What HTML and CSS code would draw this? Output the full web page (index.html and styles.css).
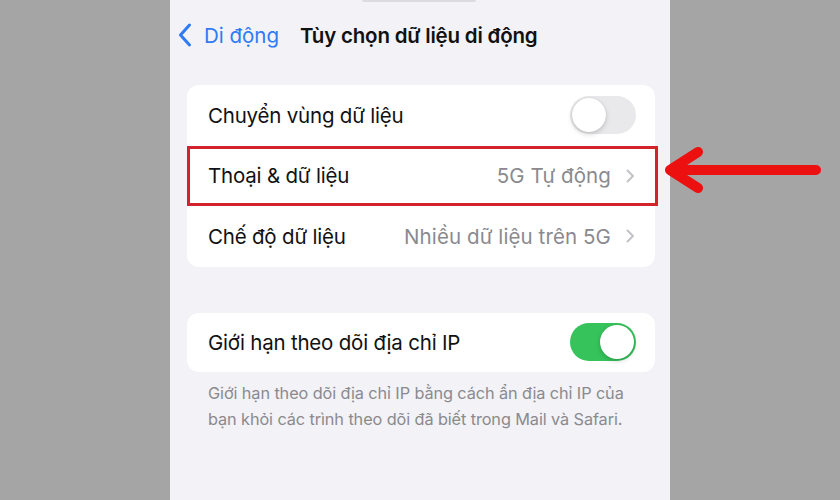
FILE: index.html
```html
<!DOCTYPE html>
<html lang="vi">
<head>
<meta charset="utf-8">
<link rel="stylesheet" href="styles.css">
</head>
<body>
<div class="stage">
  <div class="screen">
    <div class="notch"></div>
    <div class="nav">
      <div class="back">
        <svg class="back-chev" width="14" height="24" viewBox="0 0 14 24"><path d="M11.5 2 L2.5 12 L11.5 22" fill="none" stroke="#2f7bf5" stroke-width="3" stroke-linecap="round" stroke-linejoin="round"/></svg>
        <span class="back-text">Di động</span>
      </div>
      <div class="title">Tùy chọn dữ liệu di động</div>
    </div>

    <div class="card">
      <div class="row">
        <span class="label">Chuyển vùng dữ liệu</span>
        <span class="toggle off"><span class="knob"></span></span>
      </div>
      <div class="row highlighted">
        <span class="label">Thoại &amp; dữ liệu</span>
        <span class="value">5G Tự động</span>
        <svg class="chev" width="9" height="14" viewBox="0 0 9 14"><path d="M1.5 1.5 L7 7 L1.5 12.5" fill="none" stroke="#c3c3c7" stroke-width="2" stroke-linecap="round" stroke-linejoin="round"/></svg>
        <span class="redbox"></span>
      </div>
      <div class="row">
        <span class="label">Chế độ dữ liệu</span>
        <span class="value">Nhiều dữ liệu trên 5G</span>
        <svg class="chev" width="9" height="14" viewBox="0 0 9 14"><path d="M1.5 1.5 L7 7 L1.5 12.5" fill="none" stroke="#c3c3c7" stroke-width="2" stroke-linecap="round" stroke-linejoin="round"/></svg>
      </div>
    </div>

    <div class="card card2">
      <div class="row">
        <span class="label">Giới hạn theo dõi địa chỉ IP</span>
        <span class="toggle on"><span class="knob"></span></span>
      </div>
    </div>
    <p class="footnote">Giới hạn theo dõi địa chỉ IP bằng cách ẩn địa chỉ IP của bạn khỏi các trình theo dõi đã biết trong Mail và Safari.</p>
  </div>
  <svg class="arrow" width="170" height="60" viewBox="0 0 170 60"><path d="M8 25 L154 25 M36 7 L8 25 L36 43" fill="none" stroke="#ec1010" stroke-width="10" stroke-linecap="round" stroke-linejoin="round"/></svg>
</div>
</body>
</html>
```
FILE: styles.css
```css
html, body {
  margin: 0;
  padding: 0;
}
body {
  width: 840px;
  height: 500px;
  overflow: hidden;
  background: #a5a5a5;
  font-family: Inter, "Noto Sans", "Liberation Sans", sans-serif;
}
.stage {
  position: relative;
  width: 840px;
  height: 500px;
  display: flex;
  justify-content: center;
}
.screen {
  position: relative;
  width: 500px;
  height: 500px;
  background: #f2f2f7;
  box-sizing: border-box;
  padding: 0 15px 0 17px;
}
.notch {
  position: absolute;
  top: 0;
  left: 192px;
  width: 114px;
  height: 2px;
  background: #dcdce0;
  border-radius: 0 0 3px 3px;
}
.nav {
  display: flex;
  align-items: center;
  height: 70px;
  margin-left: -9px;
}
.back {
  display: flex;
  align-items: center;
  gap: 12px;
  color: #2f7bf5;
  font-size: 20.5px;
  width: 122px;
  letter-spacing: 0;
}
.back-chev {
  display: block;
}
.title {
  font-size: 20.5px;
  font-weight: 600;
  color: #111;
  letter-spacing: -0.2px;
}
.card {
  margin-top: 15px;
  background: #fff;
  border-radius: 12px;
}
.row {
  position: relative;
  display: flex;
  align-items: center;
  height: 60.6px;
  padding: 0 20px 0 21px;
}
.label {
  flex: 1;
  font-size: 20.5px;
  color: #111;
  letter-spacing: -0.2px;
}
.value {
  font-size: 20.5px;
  color: #8a8a8e;
  letter-spacing: 0.1px;
  margin-right: 15px;
}
.chev {
  display: block;
}
.redbox {
  position: absolute;
  left: 0;
  right: -3px;
  top: 0;
  bottom: 0;
  border: 3.5px solid #d2232b;
}
.toggle {
  position: relative;
  width: 66px;
  height: 38px;
  border-radius: 19px;
  margin-right: -1px;
  flex: none;
}
.toggle.off {
  background: #e9e9eb;
}
.toggle.on {
  background: #36c35b;
}
.knob {
  position: absolute;
  top: 2px;
  width: 34px;
  height: 34px;
  border-radius: 50%;
  background: #fff;
  box-shadow: 0 2px 5px rgba(0,0,0,0.18), 0 0 1px rgba(0,0,0,0.15);
}
.off .knob {
  left: 2px;
}
.on .knob {
  right: 2px;
}
.card2 {
  margin-top: 46px;
}
.card2 .row {
  height: 59px;
}
.footnote {
  margin: 8px 0 0;
  padding: 0 20px 0 21px;
  font-size: 16.3px;
  line-height: 26px;
  color: #8a8a8e;
  letter-spacing: -0.1px;
}
.arrow {
  position: absolute;
  left: 662px;
  top: 145px;
}
```
